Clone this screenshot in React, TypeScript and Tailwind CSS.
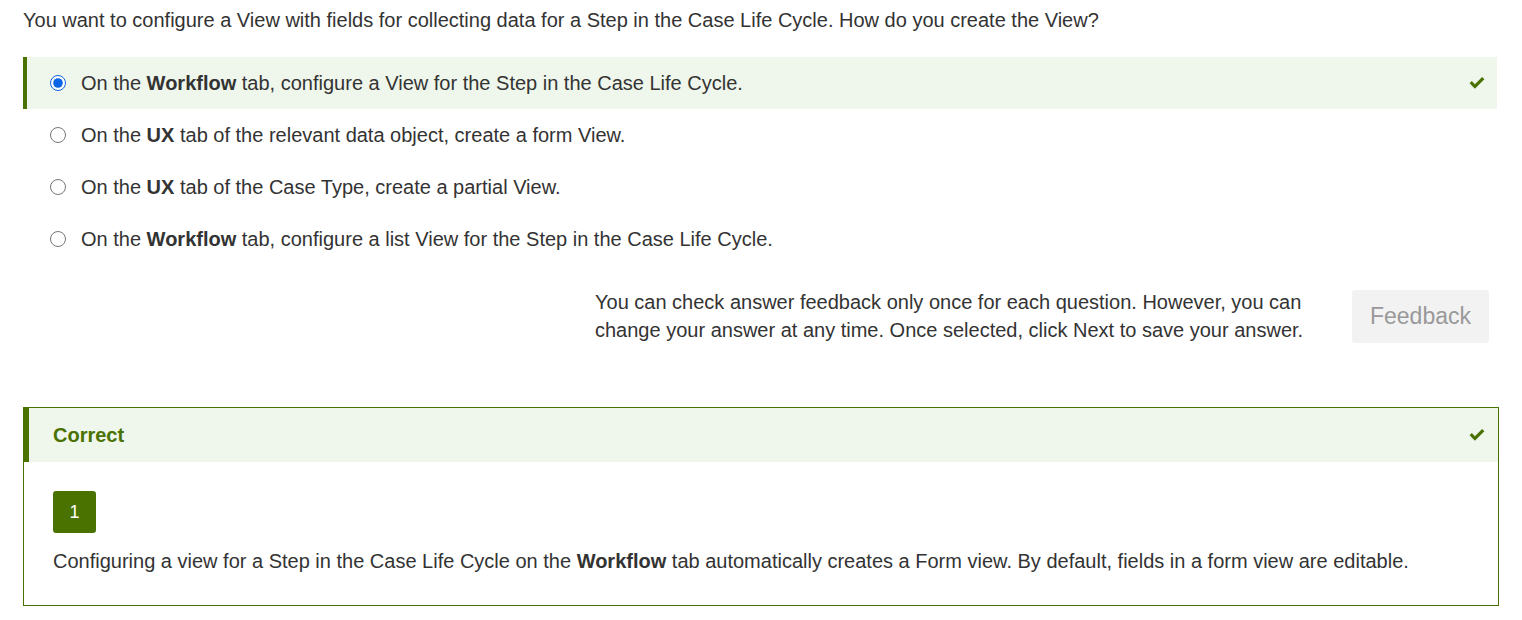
import React from 'react';

const CheckMark: React.FC<{ className?: string }> = ({ className }) => (
  <svg viewBox="0 0 16 12" className={className} fill="currentColor">
    <path d="M0.6 6.3 L2.8 4.1 L5.9 7.2 L13.1 0 L15.4 2.2 L5.9 11.7 Z" />
  </svg>
);

const options = [
  { id: 1, pre: 'On the ', bold: 'Workflow', post: ' tab, configure a View for the Step in the Case Life Cycle.', selected: true },
  { id: 2, pre: 'On the ', bold: 'UX', post: ' tab of the relevant data object, create a form View.' },
  { id: 3, pre: 'On the ', bold: 'UX', post: ' tab of the Case Type, create a partial View.' },
  { id: 4, pre: 'On the ', bold: 'Workflow', post: ' tab, configure a list View for the Step in the Case Life Cycle.' },
];

export default function App() {
  return (
    <div className="w-[1522px] h-[620px] bg-white text-[#333333] font-['Liberation_Sans',Arial,sans-serif] text-[20px]">
      <div className="pl-[23px] pr-[23px] pt-[8px]">
        <p className="leading-[24px]">
          You want to configure a View with fields for collecting data for a Step in the Case Life Cycle. How do you create the View?
        </p>

        <div className="mt-[25px] flex flex-col pr-[2px]">
          {options.map((o) => (
            <label
              key={o.id}
              className={`flex items-center h-[52px] pl-[23px] pr-[12px] border-l-[4px] ${
                o.selected ? 'bg-[#eff6ec] border-[#4a7200]' : 'border-transparent'
              }`}
            >
              <input
                type="radio"
                name="answer"
                defaultChecked={o.selected}
                className="w-4 h-4 m-0 accent-[#0b63e5]"
              />
              <span className="ml-[15px] flex-1">
                {o.pre}
                <b className="font-bold">{o.bold}</b>
                {o.post}
              </span>
              {o.selected && <CheckMark className="w-[16px] h-[12px] text-[#4a7200]" />}
            </label>
          ))}
        </div>

        <div className="mt-[23px] flex items-center justify-end pr-[10px]">
          <p className="leading-[28px] w-[730px]">
            You can check answer feedback only once for each question. However, you can
            <br />
            change your answer at any time. Once selected, click Next to save your answer.
          </p>
          <button className="ml-[27px] w-[137px] h-[53px] rounded-[3px] bg-[#f2f2f2] text-[#999999] text-[23px]">
            Feedback
          </button>
        </div>

        <div className="mt-[63px] border border-[#4a7200]">
          <div className="flex items-center h-[54px] bg-[#eff6ec] border-l-[5px] border-[#4a7200] pl-[24px] pr-[13px]">
            <span className="flex-1 font-bold text-[#4a7200]">Correct</span>
            <CheckMark className="w-[16px] h-[12px] text-[#4a7200]" />
          </div>
          <div className="pl-[29px] pt-[29px] pb-[32px]">
            <div className="w-[43px] h-[42px] rounded-[3px] bg-[#4a7200] text-white text-[18px] flex items-center justify-center">
              1
            </div>
            <p className="mt-[16px] leading-[24px]">
              Configuring a view for a Step in the Case Life Cycle on the <b className="font-bold">Workflow</b> tab automatically creates a Form view. By default, fields in a form view are editable.
            </p>
          </div>
        </div>
      </div>
    </div>
  );
}
